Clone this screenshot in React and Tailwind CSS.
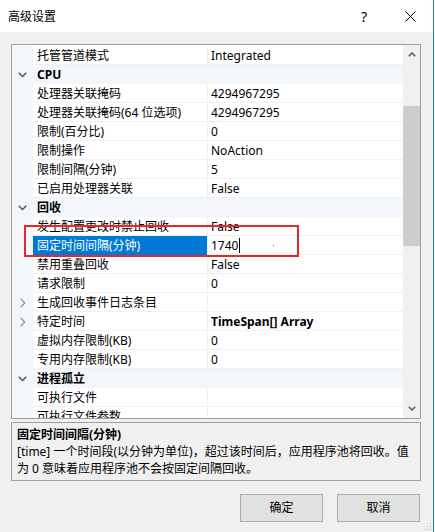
import React from "react";

const rows = [
  { l: "托管管道模式", v: "Integrated" },
  { cat: "CPU" },
  { l: "处理器关联掩码", v: "4294967295" },
  { l: "处理器关联掩码(64 位选项)", v: "4294967295" },
  { l: "限制(百分比)", v: "0" },
  { l: "限制操作", v: "NoAction" },
  { l: "限制间隔(分钟)", v: "5" },
  { l: "已启用处理器关联", v: "False" },
  { cat: "回收" },
  { l: "发生配置更改时禁止回收", v: "False" },
  { l: "固定时间间隔(分钟)", v: "1740", sel: true },
  { l: "禁用重叠回收", v: "False" },
  { l: "请求限制", v: "0" },
  { l: "生成回收事件日志条目", v: "", exp: true },
  { l: "特定时间", v: "TimeSpan[] Array", exp: true, bold: true },
  { l: "虚拟内存限制(KB)", v: "0" },
  { l: "专用内存限制(KB)", v: "0" },
  { cat: "进程孤立" },
  { l: "可执行文件", v: "" },
  { l: "可执行文件参数", v: "" },
];

function ChevDown() {
  return (
    <svg width="9" height="6" viewBox="0 0 9 6">
      <path d="M0.7 0.7 L4.5 4.5 L8.3 0.7" fill="none" stroke="#505050" strokeWidth="1.3" />
    </svg>
  );
}

function ChevRight() {
  return (
    <svg width="6" height="10" viewBox="0 0 6 10">
      <path d="M0.7 0.7 L4.7 5 L0.7 9.3" fill="none" stroke="#8a8a8a" strokeWidth="1.2" />
    </svg>
  );
}

function Row({ r }) {
  if (r.cat) {
    return (
      <div className="flex h-[19px] bg-[#f3f6fb] shrink-0">
        <div className="w-[21px] flex items-center justify-center pl-[0px]">
          <ChevDown />
        </div>
        <div className="pl-[4px] flex items-center font-bold text-[12px] leading-[19px] text-black">{r.cat}</div>
      </div>
    );
  }
  return (
    <div className="flex h-[19px] shrink-0">
      <div className="w-[21px] bg-[#f3f6fb] flex items-center justify-center">
        {r.exp ? <ChevRight /> : null}
      </div>
      <div
        className={
          r.sel
            ? "w-[174px] bg-[#0078d7] text-white flex items-center pl-[4px] text-[12px] leading-[19px] whitespace-nowrap border-b border-[#0078d7]"
            : "w-[174px] bg-white text-black flex items-center pl-[4px] text-[12px] leading-[19px] whitespace-nowrap border-b border-[#f0f0f0]"
        }
      >
        {r.l}
      </div>
      <div className="w-[1px] bg-[#f0f0f0]" />
      <div
        className={
          "flex-1 bg-white flex items-center pl-[3px] text-[12px] leading-[19px] text-black whitespace-nowrap border-b border-[#f0f0f0] " +
          (r.bold ? "font-bold" : "")
        }
      >
        {r.v}
        {r.sel ? <span className="inline-block w-[1px] h-[15px] bg-black ml-[1px]" /> : null}
      </div>
    </div>
  );
}

export default function App() {
  return (
    <div className="relative w-[434px] h-[532px] bg-[#f0f0f0] border-r border-[#1883d7] overflow-hidden font-['Noto_Sans','Noto_Sans_CJK_SC',sans-serif] text-black">
      {/* title bar */}
      <div className="h-[32px] bg-white flex items-center">
        <div className="pl-[8px] text-[12px] leading-[16px] pt-[1px]">高级设置</div>
        <div className="ml-auto w-[46px] h-[32px] flex items-center justify-center text-[14px] pt-[1px]">?</div>
        <div className="w-[46px] h-[32px] flex items-center justify-center pt-[1px]">
          <svg width="11" height="11" viewBox="0 0 11 11">
            <path d="M0.5 0.5 L10.5 10.5 M10.5 0.5 L0.5 10.5" stroke="#000" strokeWidth="1" />
          </svg>
        </div>
      </div>

      {/* property grid */}
      <div className="ml-[11px] mt-[12px] w-[410px] h-[375px] border border-[#a0a0a0] bg-white flex">
        <div className="flex-1 flex flex-col overflow-hidden pt-[1px]">
          {rows.map((r, i) => (
            <Row key={i} r={r} />
          ))}
        </div>
        <div className="w-[17px] bg-[#f0f0f0] flex flex-col">
          <div className="h-[17px] flex items-center justify-center mt-[1px]">
            <svg width="8" height="5" viewBox="0 0 8 5">
              <path d="M0.8 4.3 L4 1 L7.2 4.3" fill="none" stroke="#606060" strokeWidth="1.6" />
            </svg>
          </div>
          <div className="h-[43px]" />
          <div className="h-[140px] bg-[#cdcdcd]" />
          <div className="flex-1" />
          <div className="h-[17px] flex items-center justify-center mb-[1px]">
            <svg width="8" height="5" viewBox="0 0 8 5">
              <path d="M0.8 0.7 L4 4 L7.2 0.7" fill="none" stroke="#606060" strokeWidth="1.6" />
            </svg>
          </div>
        </div>
      </div>

      {/* description */}
      <div className="ml-[11px] mt-[3px] w-[410px] h-[59px] border border-[#a0a0a0] pl-[5px] pt-[3px] text-[12px] leading-[17px]">
        <div className="font-bold whitespace-nowrap">固定时间间隔(分钟)</div>
        <div className="whitespace-nowrap">[time] 一个时间段(以分钟为单位)，超过该时间后，应用程序池将回收。值</div>
        <div className="whitespace-nowrap">为 0 意味着应用程序池不会按固定间隔回收。</div>
      </div>

      {/* buttons */}
      <div className="mt-[13px] flex justify-end gap-[14px] pr-[13px]">
        <button className="w-[83px] h-[28px] bg-[#e1e1e1] border border-[#adadad] text-[12px] leading-[16px] text-black">确定</button>
        <button className="w-[83px] h-[28px] bg-[#e1e1e1] border border-[#adadad] text-[12px] leading-[16px] text-black">取消</button>
      </div>

      {/* red annotation */}
      <div className="absolute left-[24px] top-[225px] w-[275px] h-[32px] border-2 border-[#e8262b]" />
      <div className="absolute left-[273px] top-[245px] w-[1px] h-[1px] bg-[#e8262b]" />

      {/* resize grip */}
      <svg className="absolute right-[1px] bottom-[1px]" width="10" height="10" viewBox="0 0 10 10">
        <rect x="8" y="2" width="1" height="1" fill="#b8b8b8" />
        <rect x="5" y="5" width="1" height="1" fill="#b8b8b8" />
        <rect x="8" y="5" width="1" height="1" fill="#b8b8b8" />
        <rect x="2" y="8" width="1" height="1" fill="#b8b8b8" />
        <rect x="5" y="8" width="1" height="1" fill="#b8b8b8" />
        <rect x="8" y="8" width="1" height="1" fill="#b8b8b8" />
      </svg>
    </div>
  );
}
